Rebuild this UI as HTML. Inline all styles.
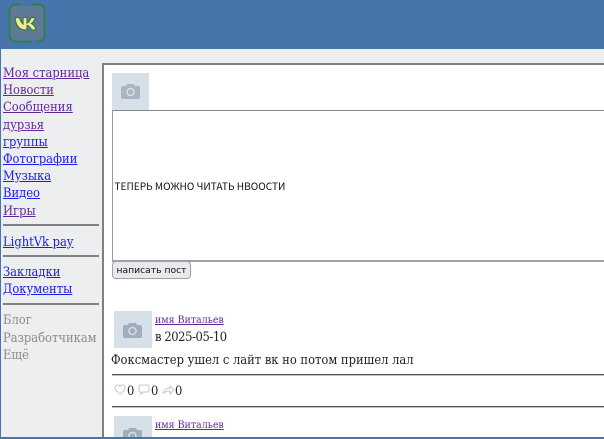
<!DOCTYPE html>
<html><head><meta charset="utf-8">
<style>
html,body{margin:0;padding:0;width:604px;height:439px;overflow:hidden;background:#fff}
body{position:relative;font-family:"DejaVu Serif",serif;font-stretch:condensed;font-size:12.8px;color:#222}
div,a,span,svg{position:absolute;white-space:nowrap}
a{color:#1a1aee;text-decoration:underline}
a.v{color:#60289c}
.n{left:3px;line-height:17px;height:17px}
.g{color:#8a8a8a}
hr{position:absolute;margin:0;border:0;height:2px;background:#808080}
hr.p{left:112px;width:492px;height:1px;background:#555;box-shadow:0 1px 0 #c4c4c4}
.ph{background:#d6e0e9}
.t{font-size:12.8px;color:#222}
</style></head><body>
<div style="left:0;top:0;width:604px;height:49px;background:#4674ab"></div>
<div style="left:0;top:49px;width:604px;height:14px;background:#edeef0"></div>
<div style="left:0;top:49px;width:102px;height:390px;background:#edeef0"></div>
<div style="left:0;top:49px;width:1px;height:390px;background:#4674ab"></div>
<svg style="left:8px;top:3px" width="38" height="40" viewBox="0 0 38 40">
<rect x="1.5" y="1.5" width="35" height="37" rx="6" fill="#5f7a96" stroke="#2f8050" stroke-width="2"/>
<rect x="14" y="0" width="10" height="3" fill="#4674ab"/><rect x="23" y="37" width="6" height="3" fill="#4674ab"/>
<path d="M7 14.500l4.500 0c1 3.500 2 5.500 3.500 6.500l0-6.500 4 0 0 5.500c1.500-.5 3-2.500 4-5.500l4.500 0c-1 3-2.500 5-4 6 2 1 3.500 3 5 6.500l-5 0c-1-2.500-2.500-4-4.500-4.500l0 4.500-2 0c-6 0-9.500-5-10-13z" fill="#f5ea8e" stroke="#2f7a4a" stroke-width="1.200"/>
</svg>

<a class="n v" style="top:65px">Моя старница</a>
<a class="n v" style="top:82px">Новости</a>
<a class="n v" style="top:99px">Сообщения</a>
<a class="n v" style="top:117px">дурзья</a>
<a class="n" style="top:134px">группы</a>
<a class="n" style="top:151px">Фотографии</a>
<a class="n" style="top:168px">Музыка</a>
<a class="n" style="top:185px">Видео</a>
<a class="n v" style="top:203px">Игры</a>
<hr style="left:3px;top:224px;width:96px">
<a class="n" style="top:234px">LightVk pay</a>
<hr style="left:3px;top:255px;width:96px">
<a class="n" style="top:264px">Закладки</a>
<a class="n" style="top:281px">Документы</a>
<hr style="left:3px;top:303px;width:96px">
<div class="n g" style="top:312px">Блог</div>
<div class="n g" style="top:330px">Разработчикам</div>
<div class="n g" style="top:347px">Ещё</div>

<div style="left:102px;top:63px;width:502px;height:376px;background:#fff"></div>
<div style="left:102px;top:63px;width:2px;height:376px;background:#808080"></div>
<div style="left:102px;top:63px;width:502px;height:2px;background:#808080"></div>

<div class="ph" style="left:112px;top:73px;width:37px;height:37px"></div>
<svg style="left:121px;top:83px" width="19" height="16" viewBox="0 0 19 16"><path d="M6 1h7l1 2h3a2 2 0 0 1 2 2v9a2 2 0 0 1-2 2H2a2 2 0 0 1-2-2V5a2 2 0 0 1 2-2h3z" fill="#a9b5c2"/><circle cx="9.500" cy="9" r="3.500" fill="none" stroke="#d6e0e9" stroke-width="1.500"/></svg>

<div style="left:112px;top:110px;width:492px;height:149px;background:#fff;border-top:1px solid #888;border-left:1px solid #999;border-bottom:2px solid #a0a0a8"></div>
<div style="left:114.500px;top:179px;font:10.100px/14px 'Noto Sans CJK SC',sans-serif;color:#111">ТЕПЕРЬ МОЖНО ЧИТАТЬ НВООСТИ</div>
<div style="left:112px;top:261px;width:77px;height:16px;background:#e9e9ed;border:1px solid #a0a0ac;border-radius:4px;font:9.200px/17px 'DejaVu Sans',sans-serif;color:#111;text-align:center">написать пост</div>

<div class="ph" style="left:114px;top:311px;width:38px;height:37px"></div>
<svg style="left:123px;top:322px" width="19" height="16" viewBox="0 0 19 16"><path d="M6 1h7l1 2h3a2 2 0 0 1 2 2v9a2 2 0 0 1-2 2H2a2 2 0 0 1-2-2V5a2 2 0 0 1 2-2h3z" fill="#a0adba"/><circle cx="9.500" cy="9" r="3.500" fill="none" stroke="#d6e0e9" stroke-width="1.500"/></svg>
<a class="v" style="left:155px;top:313px;font-size:10.500px;line-height:14px">имя Витальев</a>
<div class="t" style="left:155px;top:329px;line-height:17px;letter-spacing:-.4px">в 2025-05-10</div>
<div class="t" style="left:111px;top:352px;line-height:17px">Фоксмастер ушел с лайт вк но потом пришел лал</div>
<hr class="p" style="top:374px">

<svg style="left:114px;top:384px" width="70" height="12" viewBox="0 0 70 12" fill="none" stroke-width="1">
<path d="M6 10C3 8 1 6 1 4a2.500 2.500 0 0 1 5-1 2.500 2.500 0 0 1 5 1c0 2-2 4-5 6z" stroke="#d3bfd0"/>
<path d="M26 1h8a1 1 0 0 1 1 1v5a1 1 0 0 1-1 1h-5l-2 2V8h-1a1 1 0 0 1-1-1V2a1 1 0 0 1 1-1z" stroke="#c4c4d0"/>
<path d="M60 6l-4-4v2c-3 0-6 2-7 5 2-1 4-2 7-2v3z" stroke="#c8c8c8"/>
</svg>
<div class="t" style="left:127px;top:384px;line-height:16px">0</div>
<div class="t" style="left:151px;top:384px;line-height:16px">0</div>
<div class="t" style="left:175px;top:384px;line-height:16px">0</div>
<hr class="p" style="top:406px">

<div class="ph" style="left:114px;top:416px;width:38px;height:21px"></div>
<svg style="left:123px;top:427px" width="19" height="10" viewBox="0 0 19 10"><path d="M6 1h7l1 2h3a2 2 0 0 1 2 2v5H0V5a2 2 0 0 1 2-2h3z" fill="#a0adba"/><circle cx="9.500" cy="9" r="3.500" fill="none" stroke="#d6e0e9" stroke-width="1.500"/></svg>
<a class="v" style="left:155px;top:418px;font-size:10.500px;line-height:14px">имя Витальев</a>
<div style="left:0;top:437px;width:604px;height:2px;background:#4674ab"></div>
</body></html>
